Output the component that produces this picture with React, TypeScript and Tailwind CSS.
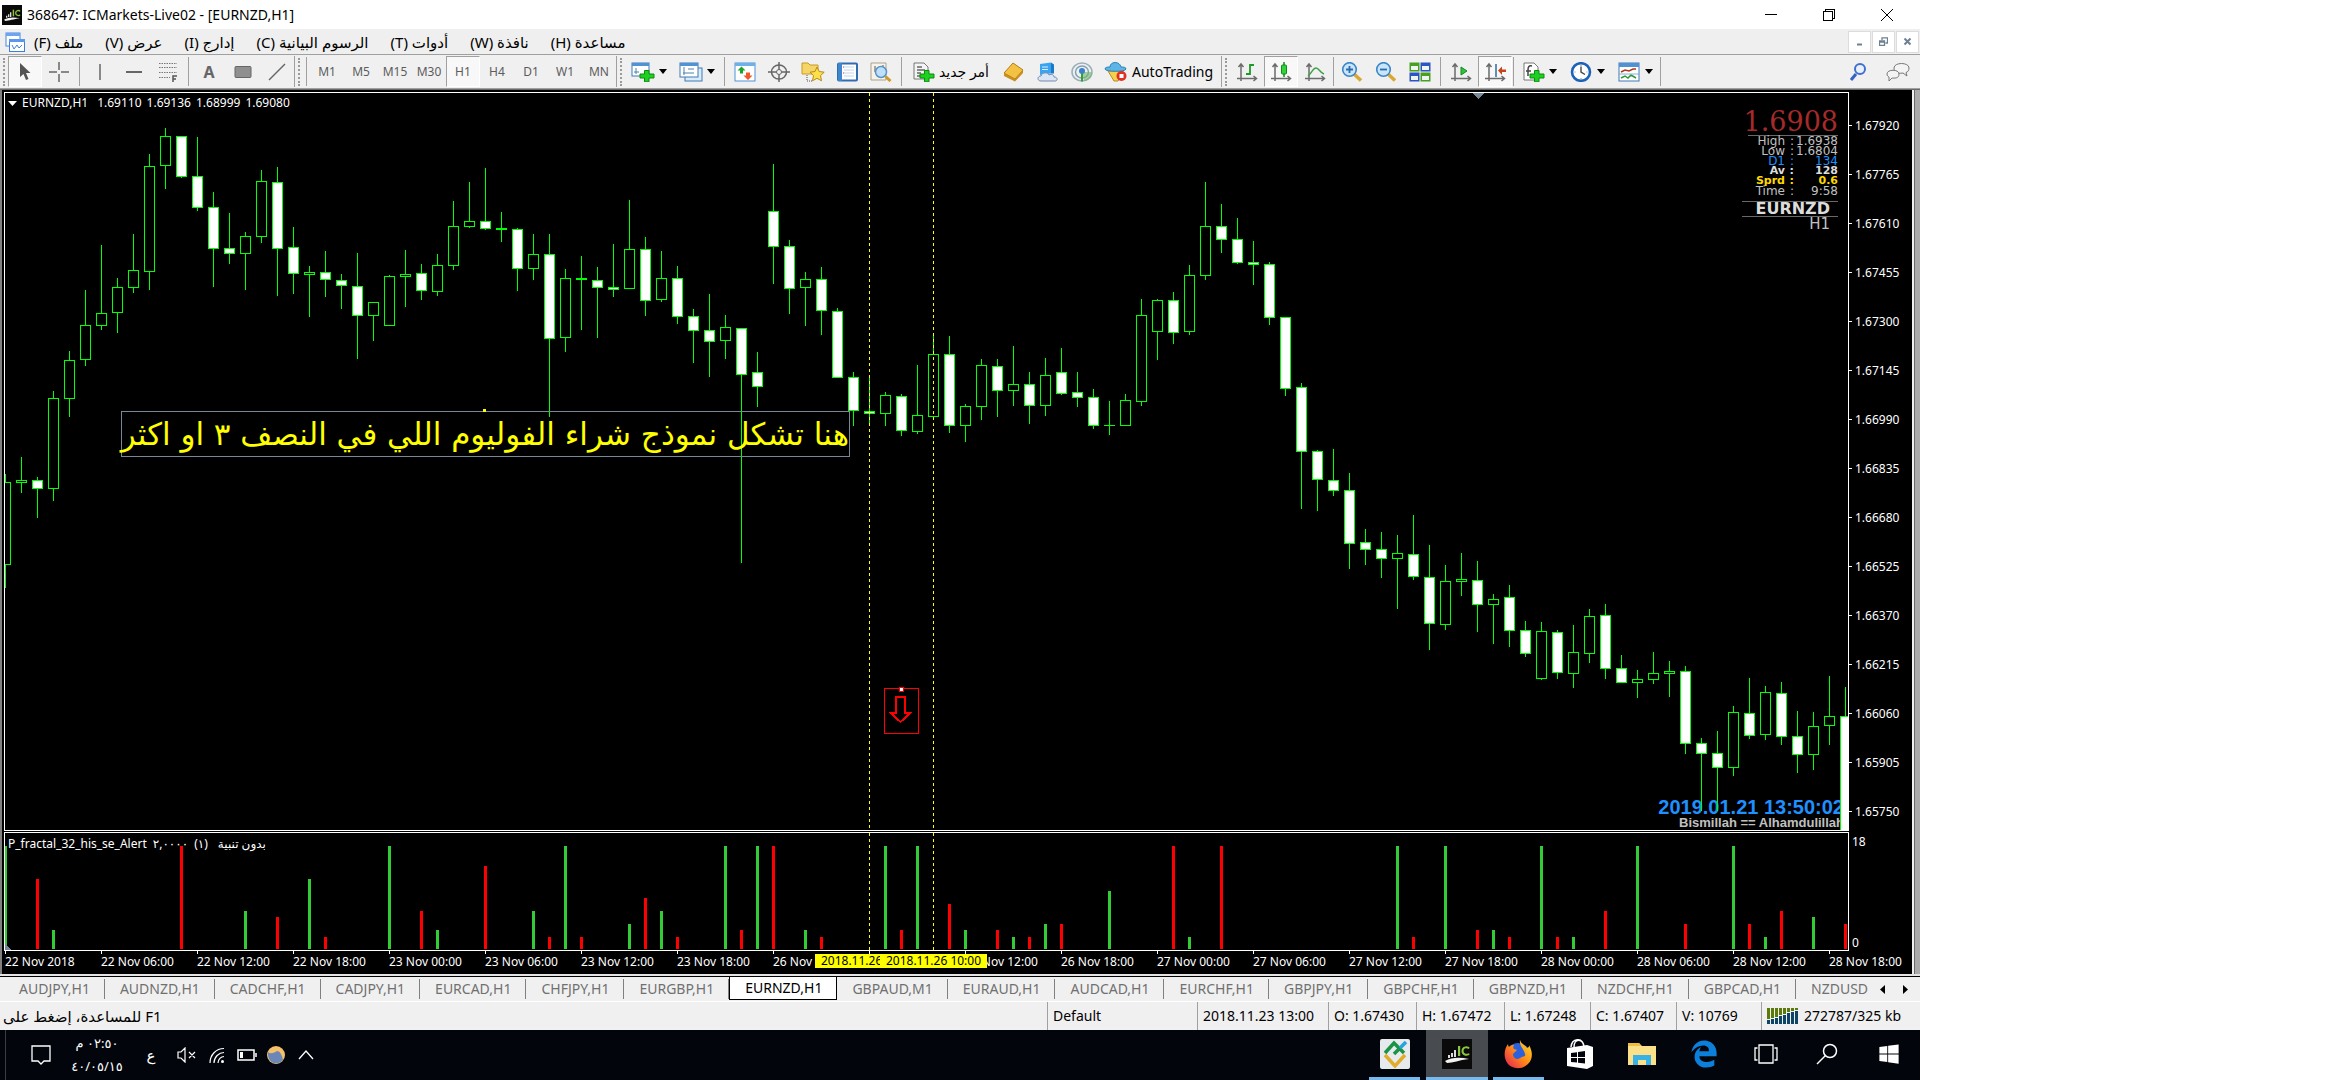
import React from "react";
import { FaWindows } from "react-icons/fa";
import { FaEdgeLegacy } from "react-icons/fa6";

// [high, body top, body bottom, low, bearish]
type Candle = [number, number, number, number, number];

const CHART_TOP = 93;
const PANE_TOP = 833;
const STEP = 16;

const candles: Candle[] = [
  [474, 482, 565, 588, 0], [457, 480, 483, 493, 0], [477, 480, 489, 518, 1], [391, 398, 489, 501, 0],
  [351, 360, 399, 417, 0], [290, 325, 360, 366, 0], [245, 313, 326, 330, 0], [278, 287, 313, 333, 0],
  [234, 270, 288, 293, 0], [154, 166, 272, 290, 0], [128, 136, 166, 189, 0], [136, 136, 177, 178, 1],
  [137, 176, 208, 211, 1], [192, 207, 249, 287, 1], [213, 248, 254, 264, 1], [232, 236, 254, 290, 0],
  [170, 181, 237, 243, 0], [167, 182, 249, 296, 1], [227, 247, 274, 294, 1], [266, 272, 275, 317, 0],
  [251, 272, 280, 297, 1], [274, 280, 286, 309, 1], [253, 286, 316, 359, 1], [302, 302, 316, 341, 0],
  [275, 276, 326, 326, 0], [250, 274, 277, 307, 0], [264, 273, 291, 300, 1], [254, 265, 292, 296, 0],
  [201, 226, 266, 270, 0], [182, 221, 227, 228, 0], [168, 221, 229, 230, 1], [212, 228, 230, 242, 0],
  [228, 229, 269, 291, 1], [234, 254, 269, 280, 0], [234, 254, 339, 417, 1], [269, 278, 338, 352, 0],
  [256, 278, 280, 330, 0], [267, 280, 288, 338, 1], [244, 287, 290, 297, 1], [200, 249, 289, 289, 0],
  [237, 249, 301, 316, 1], [251, 278, 300, 302, 0], [266, 278, 317, 324, 1], [309, 316, 331, 363, 1],
  [294, 330, 342, 377, 1], [315, 327, 341, 359, 0], [328, 328, 375, 563, 1], [352, 372, 387, 407, 1],
  [164, 211, 247, 284, 1], [240, 246, 289, 314, 1], [272, 279, 288, 326, 0], [267, 279, 311, 335, 1],
  [308, 311, 378, 378, 1], [372, 377, 411, 426, 1], [376, 411, 414, 425, 1], [392, 395, 414, 426, 0],
  [394, 396, 431, 436, 1], [365, 415, 432, 434, 0], [335, 354, 417, 417, 0], [336, 354, 426, 433, 1],
  [404, 406, 426, 442, 0], [359, 365, 407, 420, 0], [359, 366, 391, 417, 1], [346, 384, 391, 406, 0],
  [372, 384, 406, 424, 1], [358, 375, 406, 416, 0], [348, 372, 394, 395, 1], [372, 392, 398, 407, 1],
  [389, 397, 426, 429, 1], [401, 425, 426, 435, 0], [394, 400, 426, 426, 0], [299, 315, 402, 406, 0],
  [299, 300, 332, 360, 0], [292, 300, 333, 344, 1], [265, 275, 332, 335, 0], [182, 226, 276, 280, 0],
  [204, 226, 240, 253, 1], [218, 239, 263, 264, 1], [241, 262, 265, 285, 1], [262, 264, 318, 325, 1],
  [317, 317, 389, 396, 1], [383, 387, 452, 509, 1], [450, 451, 480, 511, 1], [449, 480, 491, 496, 1],
  [473, 490, 544, 569, 1], [529, 542, 550, 565, 1], [532, 549, 559, 578, 1], [535, 553, 559, 609, 0],
  [515, 554, 577, 580, 1], [545, 577, 624, 650, 1], [565, 581, 625, 630, 0], [553, 579, 582, 596, 0],
  [561, 580, 605, 632, 1], [594, 599, 605, 644, 0], [585, 597, 631, 647, 1], [621, 630, 654, 657, 1],
  [622, 631, 679, 680, 0], [630, 632, 673, 679, 1], [625, 652, 674, 688, 0], [609, 616, 654, 663, 0],
  [604, 615, 669, 679, 1], [655, 668, 683, 683, 1], [670, 679, 683, 698, 0], [652, 673, 680, 684, 0],
  [661, 671, 674, 697, 0], [666, 671, 744, 754, 1], [738, 743, 754, 811, 1], [731, 753, 768, 811, 1],
  [706, 712, 768, 776, 0], [678, 713, 736, 739, 1], [686, 692, 735, 740, 0], [682, 693, 737, 745, 1],
  [711, 736, 755, 773, 1], [712, 726, 755, 770, 0], [676, 716, 726, 745, 0], [687, 716, 840, 840, 1],
];

// [candle index, top, up signal]
const signals: [number, number, number][] = [
  [0, 846, 1], [2, 879, 0], [3, 930, 1], [11, 846, 0], [15, 911, 1], [17, 917, 0], [19, 879, 1], [20, 937, 0],
  [24, 846, 1], [26, 911, 0], [27, 930, 1], [30, 866, 0], [33, 911, 1], [34, 937, 0], [35, 846, 1], [36, 937, 0],
  [39, 924, 1], [40, 898, 0], [41, 911, 1], [42, 937, 0], [45, 846, 1], [46, 930, 0], [47, 846, 1], [48, 846, 0],
  [50, 930, 1], [51, 937, 0], [55, 846, 1], [56, 930, 0], [57, 846, 1], [59, 904, 0], [60, 930, 1], [62, 930, 0],
  [63, 937, 1], [64, 937, 0], [65, 924, 1], [66, 924, 0], [69, 891, 1], [73, 846, 0], [74, 937, 1], [76, 846, 0],
  [87, 846, 1], [88, 937, 0], [90, 846, 1], [92, 930, 0], [93, 930, 1], [94, 937, 0], [96, 846, 1], [97, 937, 0],
  [98, 937, 1], [100, 911, 0], [102, 846, 1], [105, 924, 0], [108, 846, 1], [109, 924, 0], [110, 937, 1],
  [111, 911, 0], [113, 917, 1], [115, 924, 0],
];

const prices = [
  "1.67920", "1.67765", "1.67610", "1.67455", "1.67300", "1.67145", "1.66990", "1.66835",
  "1.66680", "1.66525", "1.66370", "1.66215", "1.66060", "1.65905", "1.65750",
];

const dates = [
  "22 Nov 2018", "22 Nov 06:00", "22 Nov 12:00", "22 Nov 18:00", "23 Nov 00:00", "23 Nov 06:00", "23 Nov 12:00",
  "23 Nov 18:00", "26 Nov 00:00", "26 Nov 06:00", "26 Nov 12:00", "26 Nov 18:00", "27 Nov 00:00", "27 Nov 06:00",
  "27 Nov 12:00", "27 Nov 18:00", "28 Nov 00:00", "28 Nov 06:00", "28 Nov 12:00", "28 Nov 18:00",
];

const menus = ["ملف (F)", "عرض (V)", "إدارج (I)", "الرسوم البيانية (C)", "أدوات (T)", "نافذة (W)", "مساعدة (H)"];

const frames = ["M1", "M5", "M15", "M30", "H1", "H4", "D1", "W1", "MN"];

const tabs = [
  "AUDJPY,H1", "AUDNZD,H1", "CADCHF,H1", "CADJPY,H1", "EURCAD,H1", "CHFJPY,H1", "EURGBP,H1", "EURNZD,H1", "GBPAUD,M1",
  "EURAUD,H1", "AUDCAD,H1", "EURCHF,H1", "GBPJPY,H1", "GBPCHF,H1", "GBPNZD,H1", "NZDCHF,H1", "GBPCAD,H1", "NZDUSD",
];

const IcLogo = ({ className }: { className: string }) => (
  <svg className={className} viewBox="0 0 30 30" preserveAspectRatio="none">
    <rect width="30" height="30" fill="#0a0a0a" />
    <path d="M3 22 C10 18 18 18 27 20 C17 21 11 24 5 24 Z" fill="#f2f2f2" />
    <path d="M6 16h2v3H6zM9 14h2v4H9zM12 11h2v7h-2z" fill="#dcdcdc" />
    <path d="M27 9.500c-1-1.800-6.500-2-6.500 2.500s5.500 4.500 6.500 2.600" fill="none" stroke="#8cc63f" strokeWidth="2" />
    <path d="M16 7h2.200v10H16z" fill="#8cc63f" />
  </svg>
);

const Icon = ({ children }: { children: React.ReactNode }) => (
  <svg className="h-5 w-6 shrink-0" viewBox="0 0 24 20" fill="none">
    {children}
  </svg>
);

const Caret = () => (
  <svg className="h-[5px] w-2 shrink-0" viewBox="0 0 8 5">
    <path d="M0 0h8L4 5z" fill="#000" />
  </svg>
);

const Plus = () => <path d="M13.500 8.500h4.500v3.500h5v4h-5v3.800h-4.500V16H9v-4h4.500z" fill="#1fd11f" stroke="#0b8a12" />;

const Axes = () => (
  <path d="M6 2v17M3.500 5L6 2l2.500 3M2 16.500h19M18.500 14l3 2.500-3 2.500" stroke="#6b6b6b" strokeWidth="1.500" />
);

const ToolButton = ({ label, active, wide, children }: { label: string; active?: boolean; wide?: boolean; children: React.ReactNode }) => (
  <button
    type="button"
    aria-label={label}
    className={
      "flex h-[31px] shrink-0 items-center justify-center gap-1 border text-[12px] text-[#5c5c5c] " +
      (wide ? "w-12 " : "w-[34px] ") +
      (active ? "border-b-white border-r-white border-l-[#a0a0a0] border-t-[#a0a0a0] bg-[#f8f8f8]" : "border-transparent")
    }
  >
    {children}
    {wide && <Caret />}
  </button>
);

const Sep = ({ tight }: { tight?: boolean }) => (
  <span className={"h-[29px] w-px shrink-0 bg-[#a0a0a0] " + (tight ? "mx-px" : "mx-[3px]")} />
);

const Grip = () => (
  <span className="mx-[3px] h-7 w-0 shrink-0 border-l-2 border-dotted border-[#9a9a9a]" />
);

const TitleBar = () => (
  <header className="flex h-[29px] shrink-0 items-center bg-white pl-[2px]">
    <IcLogo className="h-5 w-5" />
    <h1 className="ml-[5px] flex-1 text-[14px] text-black">368647: ICMarkets-Live02 - [EURNZD,H1]</h1>
    <button type="button" aria-label="Minimize" className="flex w-[58px] justify-center">
      <svg className="h-3 w-3" viewBox="0 0 12 12" stroke="#000" shapeRendering="crispEdges">
        <path d="M0 5.500h12" />
      </svg>
    </button>
    <button type="button" aria-label="Restore" className="flex w-[58px] justify-center">
      <svg className="h-3 w-3" viewBox="0 0 12 12" stroke="#000" fill="none" shapeRendering="crispEdges">
        <path d="M.5 2.500h9v9h-9zM2.500 2V.5h9v9H10" />
      </svg>
    </button>
    <button type="button" aria-label="Close" className="mr-1 flex w-[58px] justify-center">
      <svg className="h-3 w-3" viewBox="0 0 12 12" stroke="#000">
        <path d="M0 0l12 12M12 0L0 12" />
      </svg>
    </button>
  </header>
);

const MdiButton = ({ label, children }: { label: string; children: React.ReactNode }) => (
  <button type="button" aria-label={label} className="flex h-[22px] w-[23px] items-center justify-center border border-[#dcdcdc] bg-white">
    <svg className="h-[9px] w-[9px]" viewBox="0 0 9 9" fill="none" stroke="#6f8191">
      {children}
    </svg>
  </button>
);

const MenuBar = () => (
  <nav className="flex h-[26px] shrink-0 items-center border-b border-[#a0a0a0] bg-[#efefef] pl-[5px]">
    <svg className="h-5 w-5" viewBox="0 0 20 20">
      <rect x="1" y="1" width="14" height="13" fill="#fff" stroke="#4a86e0" />
      <path d="M1 1h14v3H1z" fill="#6fa4f0" />
      <rect x="4.500" y="7.500" width="15" height="12" fill="#fff" stroke="#3f7de0" />
      <path d="M4 7h16v3H4z" fill="#5b96f0" />
      <path d="M7 13l2 4 3-4 2 3 3-3" fill="none" stroke="#3f7de0" />
    </svg>
    <div className="ml-[9px] flex flex-1 gap-[22px]">
      {menus.map((m) => (
        <button key={m} type="button" dir="rtl" className="whitespace-nowrap text-[15px] leading-[24px] text-black">
          {m}
        </button>
      ))}
    </div>
    <div className="flex gap-px pr-px">
      <MdiButton label="Minimize chart">
        <path d="M2 7.500h5" strokeWidth="2" />
      </MdiButton>
      <MdiButton label="Restore chart">
        <path d="M.5 4h5v4.500h-5zM.5 5h5M3 3V.8h5.500V6H6.500" strokeWidth="1.300" />
      </MdiButton>
      <MdiButton label="Close chart">
        <path d="M1.500 1.500l6 6M7.500 1.500l-6 6" strokeWidth="2" />
      </MdiButton>
    </div>
  </nav>
);

const Toolbar = () => (
  <div className="flex h-[34px] shrink-0 items-center border-b border-[#a0a0a0] bg-[#f0f0f0]">
    <Grip />
    <ToolButton label="Cursor" active>
      <Icon>
        <path d="M7 1v14l3.500-3 2.500 6 2.500-1-2.500-6h4.500z" fill="#555" />
      </Icon>
    </ToolButton>
    <ToolButton label="Crosshair">
      <Icon>
        <path d="M12 0v8M12 12v8M2 10h8M14 10h8" stroke="#666" strokeWidth="1.500" />
      </Icon>
    </ToolButton>
    <Sep />
    <ToolButton label="Vertical line">
      <Icon>
        <path d="M12 2v16" stroke="#666" strokeWidth="1.500" />
      </Icon>
    </ToolButton>
    <ToolButton label="Horizontal line">
      <Icon>
        <path d="M4 10h16" stroke="#666" strokeWidth="2" />
      </Icon>
    </ToolButton>
    <ToolButton label="Fibonacci retracement">
      <Icon>
        <path d="M3 1.500h18M3 5.500h18M3 10.500h18M3 15.500h11" stroke="#777" strokeDasharray="1.500 1" />
        <path d="M17 20v-6h4M17 17h3" stroke="#555" strokeWidth="1.500" />
      </Icon>
    </ToolButton>
    <Sep />
    <ToolButton label="Text">
      <span className="text-[16px] font-bold text-[#666]">A</span>
    </ToolButton>
    <ToolButton label="Rectangle">
      <Icon>
        <rect x="4" y="4.500" width="16" height="11" rx="1" fill="#8f8f8f" stroke="#666" />
      </Icon>
    </ToolButton>
    <ToolButton label="Trendline">
      <Icon>
        <path d="M4 18L20 2" stroke="#666" strokeWidth="1.500" />
      </Icon>
    </ToolButton>
    <span className="h-[31px] w-px bg-[#a0a0a0]" />
    <Grip />
    <Sep />
    {frames.map((f) => (
      <ToolButton key={f} label={f} active={f === "H1"}>
        {f}
      </ToolButton>
    ))}
    <span className="h-[31px] w-px bg-[#a0a0a0]" />
    <Grip />
    <ToolButton label="New chart" wide>
      <Icon>
        <rect x="1" y="1" width="17" height="13" fill="#fff" stroke="#3d7ab8" />
        <path d="M1 1h17v3H1z" fill="#4f93d2" />
        <path d="M5 6v6M3 10h5" stroke="#4c80ad" />
        <Plus />
      </Icon>
    </ToolButton>
    <ToolButton label="Profiles" wide>
      <Icon>
        <rect x="6" y="6" width="17" height="13" fill="#dcebf8" stroke="#3d7ab8" />
        <rect x="1" y="1" width="18" height="14" fill="#fff" stroke="#3d7ab8" />
        <path d="M1 1h18v3H1z" fill="#4f93d2" />
        <path d="M5 5v8M4 11h11M9 7h6" stroke="#4c80ad" />
      </Icon>
    </ToolButton>
    <Sep />
    <ToolButton label="Market watch">
      <Icon>
        <rect x="2" y="1" width="20" height="18" fill="#fff" stroke="#4d93d6" />
        <path d="M2 1h20v3H2z" fill="#6db0ea" />
        <path d="M8.500 4.500l4 4H10v3H7v-3H4.500z" fill="#18a52c" />
        <path d="M15 18l4.500-4.500H17v-3h-4v3h-2.500z" fill="#ef5a2a" />
      </Icon>
    </ToolButton>
    <ToolButton label="Data window">
      <Icon>
        <ellipse cx="12" cy="10" rx="7.500" ry="7" stroke="#666" strokeWidth="1.500" />
        <path d="M12 0v20M1 10h22" stroke="#666" strokeWidth="1.500" />
        <circle cx="12" cy="10" r="2.500" fill="#f0f0f0" stroke="#666" />
      </Icon>
    </ToolButton>
    <ToolButton label="Navigator">
      <Icon>
        <path d="M1 1h6l2 2h8v9H1z" fill="#f5d568" stroke="#c99a23" />
        <path d="M6 13v6h5" stroke="#555" strokeDasharray="1 1" />
        <path d="M16 5l2.200 4.500 5 .7-3.700 3.400 1 5.200-4.500-2.500-4.500 2.500 1-5.200L9 10.200l5-.7z" fill="#fbe04a" stroke="#b98a17" />
      </Icon>
    </ToolButton>
    <ToolButton label="Terminal">
      <Icon>
        <rect x="3" y="1.500" width="19" height="17" rx="1" fill="#fff" stroke="#2e6db4" strokeWidth="2" />
        <path d="M3 1h4v18H3z" fill="#3f86cf" />
        <path d="M9 5h10M9 8h10M9 11h10M9 14h10" stroke="#c4d4e4" />
        <path d="M8 5h1M8 11h1" stroke="#d33" />
      </Icon>
    </ToolButton>
    <ToolButton label="Strategy tester">
      <Icon>
        <path d="M2 1h15v17H2z" fill="#f7f3e8" stroke="#a8a18c" />
        <path d="M6 4v6M14 3v6" stroke="#555" />
        <circle cx="12" cy="10" r="5.500" fill="#bfe0fa" stroke="#5a93c8" strokeWidth="1.500" />
        <path d="M16.500 14.500l5 4.500" stroke="#cf9a2a" strokeWidth="3" />
      </Icon>
    </ToolButton>
    <Sep />
    <button type="button" className="mr-2 flex shrink-0 items-center gap-1 pl-[6px] text-[14px] text-black">
      <Icon>
        <path d="M3 1h10l4 4v12H3z" fill="#f4f4f4" stroke="#777" />
        <path d="M6 5h5M6 8h8M6 11h4M6 14h3" stroke="#666" strokeWidth="1.500" />
        <Plus />
      </Icon>
      <span dir="rtl" className="whitespace-nowrap">أمر جديد</span>
    </button>
    <ToolButton label="MetaEditor">
      <Icon>
        <path d="M2 11l9-10 10 7-8 9z" fill="#f3c243" stroke="#b47c14" />
        <path d="M2 11l11 6v2.500L2 14zM13 17l8-9v3l-8 8.500z" fill="#c98d1d" />
      </Icon>
    </ToolButton>
    <ToolButton label="VPS">
      <Icon>
        <path d="M4 2l11-1.500v11L4 13z" fill="#3ba4ef" />
        <path d="M15 .5l3 2v9h-3z" fill="#1c78c8" />
        <path d="M6 5h6M6 7.500h6" stroke="#d7efff" />
        <path d="M5 19c-4 0-4-5 0-5 1-4 7-4 8-1 3-1.500 5 0 5 2 4 0 4 4 1 4z" fill="#d9e4f5" stroke="#7489b0" />
      </Icon>
    </ToolButton>
    <ToolButton label="Signals">
      <Icon>
        <ellipse cx="12" cy="10" rx="10" ry="9" stroke="#9db0ba" strokeWidth="1.500" />
        <ellipse cx="12" cy="10" rx="6.500" ry="6" stroke="#7da3b5" strokeWidth="1.500" />
        <path d="M12 10l2 9c6-1 8-5 8-9" fill="#74b56e" opacity=".6" />
        <circle cx="12" cy="9" r="3" fill="#3b7fd0" />
        <path d="M12 11v8.500" stroke="#35a038" strokeWidth="2" />
      </Icon>
    </ToolButton>
    <button type="button" className="mr-2 flex shrink-0 items-center gap-1 pl-[5px] text-[14px] text-black">
      <Icon>
        <path d="M4 9h15l-5 10h-4z" fill="#f6cf4c" stroke="#bb8b1f" />
        <path d="M1 7c0-2 3-2 5-2 0-6 10-6 11 0 2 0 5 0 5 2 0 3-21 3-21 0z" fill="#5cb5e6" stroke="#2e82b5" />
        <circle cx="17.500" cy="14" r="5" fill="#e03020" />
        <rect x="15.500" y="12" width="4" height="4" fill="#fff" />
      </Icon>
      AutoTrading
    </button>
    <span className="h-[31px] w-px bg-[#a0a0a0]" />
    <Grip />
    <ToolButton label="Bar chart">
      <Icon>
        <Axes />
        <path d="M15 2v11M15 3h4M11 12h4" stroke="#1d9a26" strokeWidth="1.800" />
      </Icon>
    </ToolButton>
    <ToolButton label="Candlesticks" active>
      <Icon>
        <Axes />
        <path d="M15 0v15" stroke="#128a1c" strokeWidth="1.500" />
        <rect x="12.500" y="3" width="5" height="9" rx="1" fill="#2fd43b" stroke="#128a1c" />
      </Icon>
    </ToolButton>
    <ToolButton label="Line chart">
      <Icon>
        <Axes />
        <path d="M5 14c3-2 5-8 8-8s4 5 8 6" stroke="#3da045" strokeWidth="1.500" />
      </Icon>
    </ToolButton>
    <Sep tight />
    <ToolButton label="Zoom in">
      <Icon>
        <path d="M14 12l7 6.500" stroke="#d9a833" strokeWidth="3.500" />
        <circle cx="9.500" cy="7.500" r="6.800" fill="#c8e6fb" stroke="#3d85c6" strokeWidth="1.600" />
        <path d="M9.500 4v7M6 7.500h7" stroke="#2a6cae" strokeWidth="1.800" />
      </Icon>
    </ToolButton>
    <ToolButton label="Zoom out">
      <Icon>
        <path d="M14 12l7 6.500" stroke="#d9a833" strokeWidth="3.500" />
        <circle cx="9.500" cy="7.500" r="6.800" fill="#c8e6fb" stroke="#3d85c6" strokeWidth="1.600" />
        <path d="M6 7.500h7" stroke="#2a6cae" strokeWidth="1.800" />
      </Icon>
    </ToolButton>
    <ToolButton label="Tile windows">
      <Icon>
        <path d="M1.500.5h10v9h-10zM12.500 10.500h10v9h-10z" fill="#48a021" />
        <path d="M12.500.5h10v9h-10zM1.500 10.500h10v9h-10z" fill="#2c55c4" />
        <path d="M3 4h7v4H3zM14 4h7v4h-7zM3 14h7v4H3zM14 14h7v4h-7z" fill="#eef4ee" />
      </Icon>
    </ToolButton>
    <Sep />
    <ToolButton label="Auto scroll">
      <Icon>
        <Axes />
        <path d="M12 5v8l6-4z" fill="#35c13f" stroke="#128a1c" />
      </Icon>
    </ToolButton>
    <ToolButton label="Chart shift" active>
      <Icon>
        <Axes />
        <path d="M13 2v13" stroke="#2b6ca5" strokeWidth="1.500" />
        <path d="M15 8.500l4-4v3h4v2.500h-4V13z" fill="#c5441c" />
      </Icon>
    </ToolButton>
    <Sep tight />
    <ToolButton label="Indicators" wide>
      <Icon>
        <path d="M3 1h10l4 4v13H3z" fill="#fff" stroke="#777" />
        <path d="M11 4c-3-1-4 1-4 4v6M5 9h5" stroke="#444" strokeWidth="1.500" />
        <Plus />
      </Icon>
    </ToolButton>
    <ToolButton label="Periods" wide>
      <Icon>
        <ellipse cx="12" cy="10" rx="9" ry="8.800" fill="#fff" stroke="#1d62b8" strokeWidth="2.600" />
        <path d="M12 4.500V10l4 2.500" stroke="#444" strokeWidth="1.400" />
        <path d="M12 3v1M12 16v1M5.500 10h1M17.500 10h1" stroke="#888" />
      </Icon>
    </ToolButton>
    <ToolButton label="Templates" wide>
      <Icon>
        <rect x="2" y="1" width="20" height="18" fill="#fff" stroke="#3d7ab8" />
        <path d="M2 1h20v4H2z" fill="#4f93d2" />
        <path d="M4 10l4-2 4 1 4-2h3" stroke="#b0391c" strokeWidth="1.500" />
        <path d="M4 16l4-2 3 2 3-3 5 3" stroke="#2d9a38" strokeWidth="1.500" />
        <path d="M2 12h20" stroke="#8ab0d4" />
      </Icon>
    </ToolButton>
    <Sep tight />
    <div className="ml-auto flex gap-[6px] pr-[5px]">
      <ToolButton label="Search">
        <Icon>
          <path d="M10 12l-5 6" stroke="#3463c4" strokeWidth="3" />
          <circle cx="14" cy="7" r="5" fill="#e9f1ff" stroke="#3f6fd0" strokeWidth="2" />
        </Icon>
      </ToolButton>
      <ToolButton label="Chat">
        <Icon>
          <path d="M8 6c0-6 15-6 15 0 0 2-1 4-3 4.500l1 3.500-4-3c-6 1-9-1-9-5z" fill="#f4f4f4" stroke="#777" />
          <path d="M1 12c0-5 12-5 12 0s-5 4-7 4l-3 3v-4c-1-.5-2-1.500-2-3z" fill="#f4f4f4" stroke="#777" />
        </Icon>
      </ToolButton>
    </div>
  </div>
);

const CandleChart = () => (
  <svg className="absolute inset-0 h-full w-full" shapeRendering="crispEdges">
    {candles.map(([high, top, bottom, low, bear], i) => (
      <g key={i}>
        <rect x={i * STEP} y={high - CHART_TOP} width="1" height={low - high} fill="#00ff00" />
        <rect x={i * STEP - 5} y={top - CHART_TOP} width="11" height={bottom - top} fill="#00ff00" />
        {bottom - top > 2 && (
          <rect
            x={i * STEP - 4}
            y={top + 1 - CHART_TOP}
            width="9"
            height={bottom - top - 2}
            fill={bear ? "#ffffff" : "#000000"}
          />
        )}
      </g>
    ))}
    <path d="M864.500 0v740M928.500 0v740" stroke="#ffff00" strokeDasharray="3 3" />
    <path d="M1467 0h12l-6 6z" fill="#778899" />
    {/* sell arrow object */}
    <g fill="none" stroke="#ff0000">
      <path d="M879.500 595.500h34v45h-34z" />
      <path d="M891 604h9v16h5l-9.500 9-9.500-9h5z" strokeWidth="2" />
      <path d="M894.500 594.500h4v4h-4z" fill="#fff" />
    </g>
  </svg>
);

const rows: [string, string, string][] = [
  ["High", "1.6938", "text-[12px] text-[#c0c0c0]"],
  ["Low", "1.6804", "text-[12px] text-[#c0c0c0]"],
  ["D1", "134", "text-[12px] text-[#1e90ff]"],
  ["Av", "128", "text-[11px] font-bold text-[#dcdcdc]"],
  ["Sprd", "0.6", "text-[11px] font-bold text-[#ffd700]"],
  ["Time", "9:58", "text-[12px] text-[#c0c0c0]"],
];

const QuotePanel = () => (
  <div className="absolute right-[10px] top-4 w-24 font-['DejaVu_Sans',sans-serif]">
    <p className="text-right font-['DejaVu_Serif',serif] text-[27px] leading-[26px] text-[#a52a2a]">1.6908</p>
    <div className="ml-[6px] h-px bg-[#696969]" />
    {rows.map(([label, value, style]) => (
      <div key={label} className={"flex h-[10px] items-center whitespace-nowrap leading-[10px] " + style}>
        <span className="w-[43px] shrink-0 text-right">{label}</span>
        <span className="w-[9px] shrink-0 text-right">:</span>
        <span className="w-11 shrink-0 text-right">{value}</span>
      </div>
    ))}
    <p className="mt-[5px] flex h-4 items-center justify-end border-y border-[#696969] pr-2 text-[16px] font-bold leading-4 text-[#dcdcdc]">
      EURNZD
    </p>
    <p className="pr-2 text-right text-[15px] leading-[14px] text-[#c0c0c0]">H1</p>
  </div>
);

const ChartWindow = () => (
  <main className="flex min-h-0 flex-1 border-t border-[#696969] bg-black text-[12px] text-white">
    <div className="flex min-w-0 flex-1 flex-col border-l-2 border-[#808080] pl-[2px] pt-[2px]">
      <section className="flex min-h-0 flex-1">
        <div className="relative min-w-0 flex-1 overflow-hidden border border-white">
          <div className="absolute bottom-0 right-1 text-right font-['Liberation_Sans',sans-serif] font-bold">
            <p className="text-[20px] leading-[18px] text-[#1e90ff]">2019.01.21 13:50:02</p>
            <p className="text-[13px] leading-[14px] text-[#c0c0c0]">Bismillah == Alhamdulillah</p>
          </div>
          <CandleChart />
          <div className="absolute left-[3px] top-[1px] flex items-center gap-[5px] leading-[18px]">
            <svg className="h-[5px] w-[9px]" viewBox="0 0 9 5">
              <path d="M0 0h9L4.500 5z" fill="#fff" />
            </svg>
            <span className="mr-1">EURNZD,H1</span>
            <span>1.69110</span>
            <span>1.69136</span>
            <span>1.68999</span>
            <span>1.69080</span>
          </div>
          <p
            dir="rtl"
            className="absolute left-[116px] top-[318px] h-[46px] w-[729px] whitespace-nowrap border border-[#778899] text-center font-['DejaVu_Sans',sans-serif] text-[31px] leading-[44px] text-[#ffff00]"
          >
            هنا تشكل نموذج شراء الفوليوم اللي في النصف ٣ او اكثر
          </p>
          <span className="absolute left-[478px] top-[316px] h-[3px] w-[3px] bg-[#ffff00]" />
          <QuotePanel />
        </div>
        <ul className="w-[63px] pt-[9px]">
          {prices.map((p) => (
            <li key={p} className="flex h-[49px] items-center gap-[3px]">
              <span className="h-px w-[3px] bg-white" />
              {p}
            </li>
          ))}
        </ul>
      </section>

      <section className="mt-px flex h-[119px] shrink-0">
        <div className="relative min-w-0 flex-1 overflow-hidden border border-white">
          <svg className="absolute inset-0 h-full w-full" shapeRendering="crispEdges">
            {signals.map(([i, top, up]) => (
              <rect
                key={i}
                x={i * STEP - 1}
                y={top - PANE_TOP}
                width="3"
                height={949 - top}
                fill={up ? "#32cd32" : "#ff0000"}
              />
            ))}
            <path d="M864.500 0v117M928.500 0v117" stroke="#ffff00" strokeDasharray="3 3" />
            <path d="M0 110v7h6z" fill="#778899" />
          </svg>
          <div className="absolute left-[3px] top-[2px] flex gap-[6px] whitespace-nowrap leading-[18px]">
            <bdi>P_fractal_32_his_se_Alert</bdi>
            <bdi>٢,٠٠٠٠</bdi>
            <bdi dir="ltr">(١)</bdi>
            <bdi className="ml-1">بدون تنبية</bdi>
          </div>
        </div>
        <div className="flex w-[63px] flex-col justify-between pl-[3px] pt-[2px] leading-[16px]">
          <span>18</span>
          <span>0</span>
        </div>
      </section>

      <div className="relative flex h-[23px] shrink-0 overflow-hidden pl-px">
        {dates.map((d) => (
          <div key={d} className="w-24 shrink-0 whitespace-nowrap leading-[16px]">
            <div className="h-[3px] w-px bg-white" />
            {d}
          </div>
        ))}
        <span className="absolute left-[811px] top-[3px] w-[107px] bg-[#ffff00] text-center leading-[14px] text-black">
          2018.11.26 06:00
        </span>
        <span className="absolute left-[876px] top-[3px] w-[107px] bg-[#ffff00] text-center leading-[14px] text-black">
          2018.11.26 10:00
        </span>
      </div>
    </div>
    <div className="w-2 border-l-2 border-[#f0f0f0] bg-[#ababab]">
      <div className="h-full w-px bg-[#696969]" />
    </div>
  </main>
);

const TabBar = () => (
  <div className="flex h-7 shrink-0 border-b border-t-2 border-b-white border-t-[#e3e3e3] bg-[#f0f0f0]">
    <div className="flex min-w-0 flex-1 border-t border-black pl-1">
      <div className="flex min-w-0 flex-1 overflow-hidden">
        {tabs.map((t) => (
          <button
            key={t}
            type="button"
            className={
              "shrink-0 pl-[15px] pr-[14px] text-[14px] " +
              (t === "EURNZD,H1"
                ? "h-[23px] border border-t-0 border-black bg-white leading-[22px] text-black"
                : "my-[2px] h-5 border-r border-[#808080] leading-5 text-[#707070]")
            }
          >
            {t}
          </button>
        ))}
      </div>
      <div className="flex items-center gap-[18px] bg-[#f0f0f0] pl-[6px] pr-3">
        <button type="button" aria-label="Scroll left">
          <svg className="h-[9px] w-[5px]" viewBox="0 0 5 9">
            <path d="M5 0v9L0 4.500z" />
          </svg>
        </button>
        <button type="button" aria-label="Scroll right">
          <svg className="h-[9px] w-[5px]" viewBox="0 0 5 9">
            <path d="M0 0v9l5-4.500z" />
          </svg>
        </button>
      </div>
    </div>
  </div>
);

const StatusBar = () => (
  <footer className="flex h-7 shrink-0 bg-[#f0f0f0] text-[14px] leading-[28px] text-black">
    <p className="flex-1 pl-[3px] text-[15px]">
      <bdi dir="rtl">F1 للمساعدة، إضغط على</bdi>
    </p>
    <span className="w-[150px] border-l border-[#a0a0a0] pl-[5px]">Default</span>
    <span className="w-[131px] border-l border-[#a0a0a0] pl-[5px]">2018.11.23 13:00</span>
    <span className="w-[88px] border-l border-[#a0a0a0] pl-[5px]">O: 1.67430</span>
    <span className="w-[88px] border-l border-[#a0a0a0] pl-[5px]">H: 1.67472</span>
    <span className="w-[86px] border-l border-[#a0a0a0] pl-[5px]">L: 1.67248</span>
    <span className="w-[86px] border-l border-[#a0a0a0] pl-[5px]">C: 1.67407</span>
    <span className="w-[85px] border-l border-[#a0a0a0] pl-[5px]">V: 10769</span>
    <span className="flex w-[159px] items-center gap-[5px] border-l border-[#a0a0a0] pl-[5px]">
      <svg className="h-4 w-8" viewBox="0 0 32 16" shapeRendering="crispEdges">
        {[12, 11, 10, 8, 7, 5, 4, 3].map((y, i) => (
          <g key={i}>
            <rect x={i * 4} y="0" width="3" height={y - 1} fill="#5c7a0c" />
            <rect x={i * 4} y={y} width="3" height={16 - y} fill="#0d4566" />
          </g>
        ))}
      </svg>
      272787/325 kb
    </span>
  </footer>
);

const TaskButton = ({ label, active, running, children }: { label: string; active?: boolean; running?: boolean; children: React.ReactNode }) => (
  <button type="button" aria-label={label} className={"flex flex-col items-center " + (active ? "bg-[#484b4f]" : "")}>
    <span className="flex flex-1 items-center">{children}</span>
    <span className={"h-[3px] " + (active ? "w-full bg-[#76b9ed]" : running ? "w-[51px] bg-[#76b9ed]" : "w-full")} />
  </button>
);

const Taskbar = () => (
  <footer className="flex h-[50px] shrink-0 items-stretch justify-between bg-[#02060c] text-white">
    <div className="ml-[5px] flex items-center border-l border-[#3a3d42] pl-[25px]">
      <svg className="h-5 w-5" viewBox="0 0 20 20" fill="none" stroke="#fff" strokeWidth="1.300">
        <path d="M1 1h18v15h-6l-3 3-3-3H1z" />
      </svg>
      <div dir="rtl" className="ml-4 w-[60px] text-center text-[13px] leading-[23px]">
        <p>٠٢:٥٠ م</p>
        <p>٤٠/٠٥/١٥</p>
      </div>
      <span className="ml-4 w-4 text-center text-[15px]">ع</span>
      <div className="ml-[18px] flex items-center gap-[10px]">
        <svg className="h-4 w-5" viewBox="0 0 20 16" fill="none" stroke="#fff" strokeWidth="1.200">
          <path d="M1 5h3l4-4v14l-4-4H1zM12 5l6 6M18 5l-6 6" />
        </svg>
        <svg className="h-4 w-5" viewBox="0 0 20 16" fill="none" stroke="#fff" strokeWidth="1.200">
          <path d="M3 16C3 8 9 1.500 17 1.500M7 16c0-6 5-10.500 10-10.500M11 16c0-3.500 3-6.500 6-6.500" />
          <circle cx="15.500" cy="14.500" r="1.500" fill="#fff" stroke="none" />
        </svg>
        <svg className="h-3 w-5" viewBox="0 0 20 12" fill="none" stroke="#fff" strokeWidth="1.500">
          <path d="M1 1h16v10H1zM19 4v4" />
          <path d="M3 3h3v6H3z" fill="#fff" stroke="none" />
        </svg>
        <svg className="h-[18px] w-[18px]" viewBox="0 0 18 18">
          <circle cx="9" cy="9" r="9" fill="#f5c06a" />
          <path d="M1 6c3 3 7 0 9-1 3 0 5 4 6 9-5 6-16 4-15-8z" fill="#6b86b8" />
        </svg>
        <svg className="ml-[3px] h-3 w-4" viewBox="0 0 16 12" fill="none" stroke="#fff" strokeWidth="1.300">
          <path d="M1 10l7-8 7 8" />
        </svg>
      </div>
    </div>

    <div className="grid w-[556px] grid-cols-9">
      <TaskButton label="LiteForex terminal" running>
        <svg className="h-[30px] w-[30px]" viewBox="0 0 30 30" fill="none">
          <rect width="30" height="30" rx="2" fill="#e6eaec" />
          <path d="M5 16L15 27 25 16" stroke="#e0ac2c" strokeWidth="3.500" />
          <path d="M5 14L14 4 24 14M14 15L19 10" stroke="#199447" strokeWidth="3.500" />
          <path d="M20 9l6-6" stroke="#29a3dc" strokeWidth="3.500" />
        </svg>
      </TaskButton>
      <TaskButton label="IC Markets terminal" active>
        <IcLogo className="h-[30px] w-[30px]" />
      </TaskButton>
      <TaskButton label="Firefox" running>
        <svg className="h-[30px] w-[30px]" viewBox="0 0 30 30">
          <defs>
            <linearGradient id="fox" x1="1" y1="0" x2="0" y2="1">
              <stop offset="0" stopColor="#ffe226" />
              <stop offset=".5" stopColor="#ff8a16" />
              <stop offset="1" stopColor="#e3165b" />
            </linearGradient>
          </defs>
          <circle cx="15" cy="16" r="12" fill="#2b62dc" />
          <path d="M17 1c1 4 5 5 7 8 3-1 2-3 2-3 4 7 4 14-1 19-6 6-16 5-20 0C0 19 1 10 5 5c0 2 1 3 1 3 2-2 4-2 5-2-1 2-1 3 0 4l3 1-4 4c0 5 5 6 7 4 3-2 6-1 5-4-1-5-6-8-5-14z" fill="url(#fox)" />
        </svg>
      </TaskButton>
      <TaskButton label="Store">
        <svg className="h-[30px] w-[30px]" viewBox="0 0 30 30">
          <path d="M9 8c0-9 9-9 10 0M6 8c1-9 11-10 13-1" fill="none" stroke="#fff" strokeWidth="1.500" />
          <path d="M2 9l20-3 6 2v19l-6 3-20-3z" fill="#fff" />
          <path d="M6 14l6-.8V18H6zM13 13l7-1v6h-7zM6 19h6v4.500L6 23zM13 19h7v5.500l-7-.8z" fill="#02060c" />
        </svg>
      </TaskButton>
      <TaskButton label="File Explorer">
        <svg className="h-[30px] w-[30px]" viewBox="0 0 30 30">
          <path d="M1 4h11l3 3h14v19H1z" fill="#fbe08a" />
          <path d="M1 4h11l2 3H1z" fill="#efbd3f" />
          <path d="M6 26V16h18v10h-5v-5h-8v5z" fill="#38b1e5" />
        </svg>
      </TaskButton>
      <TaskButton label="Edge">
        <FaEdgeLegacy className="h-[28px] w-[28px] text-[#0c7fdb]" />
      </TaskButton>
      <TaskButton label="Task view">
        <svg className="h-5 w-6" viewBox="0 0 24 20" fill="none" stroke="#fff" strokeWidth="1.300">
          <path d="M5 1h14v18H5zM3.500 4H1v12h2.500M20.500 4H23v12h-2.500" />
        </svg>
      </TaskButton>
      <TaskButton label="Search">
        <svg className="h-[22px] w-[22px]" viewBox="0 0 22 22" fill="none" stroke="#fff" strokeWidth="1.500">
          <circle cx="14" cy="8" r="6.500" />
          <path d="M9.500 12.500L1 21" />
        </svg>
      </TaskButton>
      <TaskButton label="Start">
        <FaWindows className="h-[22px] w-[22px]" />
      </TaskButton>
    </div>
  </footer>
);

export default function App() {
  return (
    <div className="h-screen bg-white pr-[430px] font-['Noto_Sans','DejaVu_Sans',sans-serif]">
      <div className="flex h-full flex-col">
        <TitleBar />
        <MenuBar />
        <Toolbar />
        <ChartWindow />
        <TabBar />
        <StatusBar />
        <Taskbar />
      </div>
    </div>
  );
}
